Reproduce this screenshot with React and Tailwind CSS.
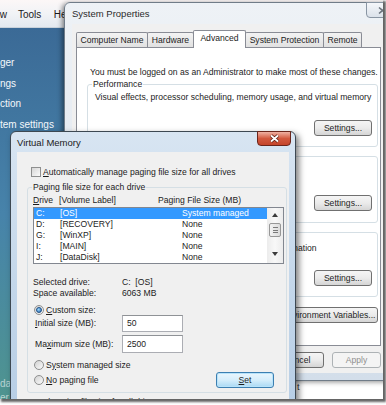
import React from "react";

// mnemonic underline
const U = ({ children }) => <span className="underline decoration-[0.6px] underline-offset-[1px]">{children}</span>;

function Button({ children, className = "", kind = "normal" }) {
  const look = {
    normal: "border-[#707070] bg-gradient-to-b from-[#f5f5f5] via-[#ebebeb] to-[#d5d5d5] text-[#1e1e1e]",
    focus: "border-[#3c7fb1] bg-gradient-to-b from-[#eaf6fd] via-[#d6eefb] to-[#a9d9f4] text-[#1e1e1e] shadow-[inset_0_0_0_1px_#b8e3fa]",
    disabled: "border-[#adb2b5] bg-[#f4f4f4] text-[#8f8f8f]",
  }[kind];
  return (
    <div className={`flex items-center justify-center rounded-[3px] border whitespace-nowrap ${look} ${className}`}>
      {children}
    </div>
  );
}

function Group({ label, labelBg = "bg-white", className = "", children }) {
  return (
    <div className={`relative rounded-[3px] border border-[#d5dfe5] ${className}`}>
      <span className={`absolute left-[4px] top-[-6px] px-[1px] leading-[10px] whitespace-nowrap ${labelBg}`}>{label}</span>
      {children}
    </div>
  );
}

const Radio = ({ checked = false }) => (
  <span className="w-[10px] h-[10px] shrink-0 rounded-full border border-[#8e8f8f] bg-gradient-to-br from-[#d2d2d2] to-[#fbfbfb] flex items-center justify-center">
    {checked && (
      <span className="w-[6px] h-[6px] rounded-full border border-[#1d4f86] bg-[radial-gradient(circle_at_35%_35%,#9ad8ff,#2767ad)]" />
    )}
  </span>
);

const Arrow = ({ up }) => (
  <svg width="6" height="4" viewBox="0 0 6 4">
    <path d={up ? "M0 4 L3 0 L6 4 Z" : "M0 0 L3 4 L6 0 Z"} fill="#3c3c3c" />
  </svg>
);

const CloseX = ({ light }) => (
  <svg width="11" height="9" viewBox="0 0 11 9">
    {light ? (
      <path d="M2 1.5 L9 7.5 M9 1.5 L2 7.5" stroke="#6b737c" strokeWidth="1.6" />
    ) : (
      <>
        <path d="M2 1.5 L9 7.5 M9 1.5 L2 7.5" stroke="#5a1d14" strokeWidth="3.4" />
        <path d="M2 1.5 L9 7.5 M9 1.5 L2 7.5" stroke="#ffffff" strokeWidth="1.8" />
      </>
    )}
  </svg>
);

function ControlPanel() {
  return (
    <div className="flex flex-col h-full">
      <div className="h-[28px] shrink-0 flex items-center pt-[2px] text-[10px] text-[#1a1a1a] bg-gradient-to-b from-[#fcf7f7] via-[#f1f3f6] to-[#e4e9ef] border-b border-[#c9d2db]">
        <span className="ml-[-14.5px]">View</span>
        <span className="ml-[11px]">Tools</span>
        <span className="ml-[12.5px]">Help</span>
      </div>
      <div className="flex flex-1 min-h-0">
        <div className="w-[70px] shrink-0 flex flex-col pt-[25px] text-[10px] text-[#f4f8fb] bg-gradient-to-b from-[#3b6a96] via-[#4783aa] to-[#4f948f]">
          {["ger", "ngs", "ction", "tem settings"].map((t) => (
            <div key={t} className="h-[20.5px] flex items-center whitespace-nowrap">{t}</div>
          ))}
          <div className="mt-auto mb-[-6px] text-white/60">
            <div className="h-[14px] flex items-center">date</div>
            <div className="h-[14px] flex items-center">er</div>
          </div>
        </div>
        <div className="flex-1 bg-white flex flex-col justify-end pb-[7px] pl-[227px] text-[9px] text-[#333]">t</div>
      </div>
    </div>
  );
}

const tabs = [
  { label: "Computer Name", w: "w-[72px]" },
  { label: "Hardware", w: "w-[47px]" },
  { label: "Advanced", w: "w-[53px]", active: true },
  { label: "System Protection", w: "w-[79px]" },
  { label: "Remote", w: "w-[39px]" },
];

function SystemProperties() {
  return (
    <div className="absolute left-[64px] top-[2px] w-[340px] h-[379px] rounded-t-[6px] border border-[#707c88] bg-gradient-to-b from-[#eef2f6] via-[#e3e9f0] to-[#d3deea] shadow-[-2px_1px_5px_rgba(0,0,0,0.45)]">
      <div className="absolute left-[301px] top-[-1px] w-[32px] h-[16px] rounded-b-[4px] border border-[#8995a3] bg-gradient-to-b from-[#f5f7fa] to-[#dbe2ea] flex items-center justify-center">
        <CloseX light />
      </div>
      <div className="h-[21px] pl-[7px] flex items-center text-[9.5px] text-[#2b2b2b]">System Properties</div>
      <div className="mx-[7px] h-[349px] bg-[#f0f0f0] pt-[6px] pl-[4px]">
        <div className="h-[17px] flex items-end">
          {tabs.map((t, i) =>
            t.active ? (
              <div key={t.label} className={`${t.w} h-[18px] mb-[-1px] -ml-px relative z-10 border border-b-0 border-[#898c95] bg-white flex items-center justify-center pb-[2px] rounded-t-[2px]`}>
                {t.label}
              </div>
            ) : (
              <div key={t.label} className={`${t.w} h-[15px] ${i ? "-ml-px" : ""} border border-b-0 border-[#898c95] bg-gradient-to-b from-[#f3f3f3] to-[#e1e1e1] flex items-center justify-center whitespace-nowrap rounded-t-[2px]`}>
                {t.label}
              </div>
            )
          )}
        </div>
        <div className="w-[305px] h-[299px] border border-[#898c95] bg-white flex flex-col">
          <div className="mt-[19px] h-[10px] pl-[13px] flex items-center whitespace-nowrap">
            You must be logged on as an Administrator to make most of these changes.
          </div>
          <Group label="Performance" className="mt-[7px] ml-[10px] w-[291px] h-[63px] flex flex-col">
            <div className="pt-[7px] pl-[7px] h-[17px] flex items-end whitespace-nowrap">
              Visual effects, processor scheduling, memory usage, and virtual memory
            </div>
            <Button className="mt-[18px] self-end mr-[5px] w-[58px] h-[16px]">Settings...</Button>
          </Group>
          <Group label="User Profiles" className="mt-[9px] ml-[10px] w-[291px] h-[67px] flex flex-col">
            <div className="pt-[8px] pl-[7px] h-[18px] flex items-end whitespace-nowrap">
              Desktop settings related to your logon
            </div>
            <Button className="mt-[20px] self-end mr-[5px] w-[58px] h-[16px]">Settings...</Button>
          </Group>
          <Group label="Startup and Recovery" className="mt-[9px] ml-[10px] w-[291px] h-[65px] flex flex-col">
            <div className="pt-[10px] pl-[7px] h-[20px] flex items-end whitespace-nowrap">
              System startup, system failure, and debugging information
            </div>
            <Button className="mt-[17px] self-end mr-[5px] w-[58px] h-[16px]">Settings...</Button>
          </Group>
          <Button className="mt-[10px] self-end mr-[2px] w-[98px] h-[16px]">Environment Variables...</Button>
        </div>
        <div className="mt-[6px] w-[305px] h-[16px] flex justify-end gap-[8px]">
          <Button className="w-[54px]">OK</Button>
          <Button className="w-[54px]">Cancel</Button>
          <Button kind="disabled" className="w-[49px]">Apply</Button>
        </div>
      </div>
    </div>
  );
}

const drives = [
  ["C:", "[OS]", "System managed"],
  ["D:", "[RECOVERY]", "None"],
  ["G:", "[WinXP]", "None"],
  ["I:", "[MAIN]", "None"],
  ["J:", "[DataDisk]", "None"],
];

function VirtualMemory() {
  return (
    <div className="absolute left-[10px] top-[131px] w-[286px] h-[300px] rounded-t-[6px] border border-[#3d4852] bg-gradient-to-b from-[#d8e5f2] via-[#c4d7ea] to-[#b5cce4] shadow-[3px_3px_6px_rgba(0,0,0,0.5)]">
      <div className="absolute right-[4px] top-[-1px] w-[34px] h-[15px] rounded-b-[4px] border border-[#6b251b] bg-gradient-to-b from-[#eeb1a3] via-[#d2593f] to-[#c4442a] flex items-center justify-center">
        <CloseX />
      </div>
      <div className="h-[20px] pt-[2px] pl-[6px] flex items-center text-[9.5px] text-[#1a1a1a]">Virtual Memory</div>
      <div className="mx-[6px] h-[270px] bg-[#f0f0f0] flex flex-col">
        <div className="mt-[15px] pl-[14px] h-[10px] flex items-center gap-[2px] whitespace-nowrap">
          <span className="w-[10px] h-[10px] border border-[#8e8f8f] bg-gradient-to-br from-[#d6d6d6] to-[#fbfbfb]" />
          <span><U>A</U>utomatically manage paging file size for all drives</span>
        </div>
        <Group label="Paging file size for each drive" labelBg="bg-[#f0f0f0]" className="mt-[10px] ml-[10px] w-[260px] h-[206px] flex flex-col">
          <div className="mt-[7px] h-[10px] pl-[5px] flex items-center whitespace-nowrap">
            <span className="w-[26px]"><U>D</U>rive</span>
            <span className="w-[99px]">[Volume Label]</span>
            <span>Paging File Size (MB)</span>
          </div>
          <div className="mt-[2px] ml-[5px] w-[251px] h-[57px] border border-[#828790] bg-white flex">
            <div className="w-[233px] flex flex-col">
              {drives.map(([d, l, s], i) => (
                <div key={d} className={`h-[11px] pl-[2px] flex items-center whitespace-nowrap ${i === 0 ? "bg-[#3399ff] text-white" : ""}`}>
                  <span className="w-[24px]">{d}</span>
                  <span className="w-[122px]">{l}</span>
                  <span>{s}</span>
                </div>
              ))}
            </div>
            <div className="flex-1 bg-gradient-to-r from-[#ececec] via-[#f8f8f8] to-[#ececec] flex flex-col items-center">
              <div className="h-[14px] flex items-center"><Arrow up /></div>
              <div className="mt-[1px] w-[12px] h-[14px] rounded-[2px] border border-[#979797] bg-gradient-to-r from-[#f2f2f2] to-[#dcdcdc] flex flex-col items-center justify-center gap-[1.5px]">
                <span className="w-[5px] h-px bg-[#7a7a7a]" />
                <span className="w-[5px] h-px bg-[#7a7a7a]" />
                <span className="w-[5px] h-px bg-[#7a7a7a]" />
              </div>
              <div className="mt-auto mb-[5px] h-[8px] flex items-center"><Arrow /></div>
            </div>
          </div>
          <div className="mt-[13px] h-[11px] pl-[5px] flex items-center whitespace-nowrap">
            <span className="w-[89px]">Selected drive:</span>
            <span>C:&nbsp;&nbsp;[OS]</span>
          </div>
          <div className="h-[11px] pl-[5px] flex items-center whitespace-nowrap">
            <span className="w-[89px]">Space available:</span>
            <span>6063 MB</span>
          </div>
          <div className="mt-[6px] h-[10px] pl-[6px] flex items-center gap-[2px]">
            <Radio checked />
            <span><U>C</U>ustom size:</span>
          </div>
          <div className="h-[17px] pl-[7px] flex items-center whitespace-nowrap">
            <span className="w-[87px]"><U>I</U>nitial size (MB):</span>
            <span className="w-[61px] h-[17px] border border-[#abadb3] border-t-[#8f9296] bg-white flex items-center pl-[4px]">50</span>
          </div>
          <div className="mt-[3px] h-[18px] pl-[7px] flex items-center whitespace-nowrap">
            <span className="w-[87px]">Ma<U>x</U>imum size (MB):</span>
            <span className="w-[61px] h-[18px] border border-[#abadb3] border-t-[#8f9296] bg-white flex items-center pl-[4px]">2500</span>
          </div>
          <div className="mt-[7px] h-[10px] pl-[6px] flex items-center gap-[2px] whitespace-nowrap">
            <Radio />
            <span>S<U>y</U>stem managed size</span>
          </div>
          <div className="mt-[2px] h-[16px] pl-[6px] pr-[12px] flex items-center gap-[2px] whitespace-nowrap">
            <Radio />
            <span><U>N</U>o paging file</span>
            <Button kind="focus" className="ml-auto w-[58px] h-[16px]"><U>S</U>et</Button>
          </div>
        </Group>
        <div className="mt-[4px] pl-[15px] h-[10px] flex items-center whitespace-nowrap">
          Total paging file size for all drives
        </div>
      </div>
    </div>
  );
}

export default function App() {
  return (
    <div className="w-[386px] h-[405px] bg-white">
      <div className="relative w-[383px] h-[399px] overflow-hidden shadow-[2px_2px_2px_1px_rgba(50,50,50,0.75)] text-[8.6px] leading-none text-[#1c1c1c] [font-family:'Liberation_Sans',Arial,sans-serif]">
        <ControlPanel />
        <SystemProperties />
        <VirtualMemory />
      </div>
    </div>
  );
}
